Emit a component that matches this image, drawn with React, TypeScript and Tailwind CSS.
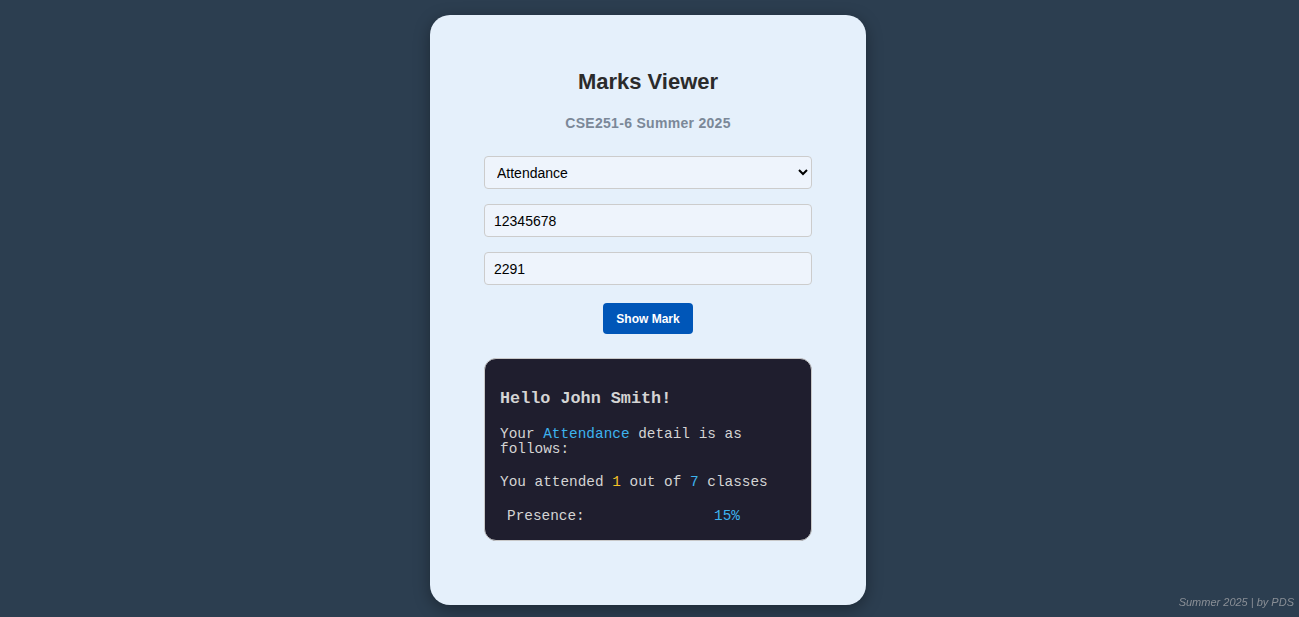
import { useState } from "react";

export default function App() {
  const [type, setType] = useState("Attendance");
  const [id, setId] = useState("12345678");
  const [code, setCode] = useState("2291");

  return (
    <div className="min-h-screen bg-[#2c3e50] flex justify-center pt-[15px] pr-[3px] font-['Liberation_Sans',Arial,sans-serif]">
      <div className="w-[436px] h-[590px] rounded-[20px] bg-[#e5f0fb] shadow-[0_4px_16px_rgba(0,0,0,0.35)] px-[54px] pt-[54px] flex flex-col items-center">
        <h1 className="text-[22px] leading-[26px] font-bold text-[#2b2b2b]">Marks Viewer</h1>
        <h2 className="mt-[20px] text-[14px] leading-[17px] font-bold text-[#7b8898] tracking-[0.3px]">
          CSE251-6 Summer 2025
        </h2>

        <select
          value={type}
          onChange={(e) => setType(e.target.value)}
          className="mt-[24px] w-full h-[33px] rounded-[4px] border border-[#cccccc] bg-[#eef4fc] pl-[8px] pr-[6px] text-[14px] text-black"
        >
          <option>Attendance</option>
          <option>Quiz</option>
          <option>Assignment</option>
        </select>
        <input
          value={id}
          onChange={(e) => setId(e.target.value)}
          className="mt-[15px] w-full h-[33px] rounded-[4px] border border-[#cccccc] bg-[#eef4fc] px-[9px] text-[14px] text-black outline-none"
        />
        <input
          value={code}
          onChange={(e) => setCode(e.target.value)}
          className="mt-[15px] w-full h-[33px] rounded-[4px] border border-[#cccccc] bg-[#eef4fc] px-[9px] text-[14px] text-black outline-none"
        />
        <button className="mt-[18px] w-[90px] h-[31px] rounded-[4px] bg-[#0056b8] text-white text-[12px] font-bold">
          Show Mark
        </button>

        <div className="mt-[24px] w-full h-[183px] rounded-[12px] border border-[#c8c8c8] bg-[#1f1e2e] px-[15px] text-[#d4d4d4] font-['Liberation_Mono','Courier_New',monospace]">
          <h3 className="mt-[30px] text-[16.8px] leading-[20px] font-bold">Hello John Smith!</h3>
          <p className="mt-[18px] text-[14.4px] leading-[15px]">
            Your <span className="text-[#3db3ee]">Attendance</span> detail is as follows:
          </p>
          <p className="mt-[18px] text-[14.4px] leading-[15px]">
            You attended <span className="text-[#f5c228]">1</span> out of{" "}
            <span className="text-[#3db3ee]">7</span> classes
          </p>
          <div className="mt-[19px] flex text-[14.4px] leading-[15px]">
            <span className="w-[214px] pl-[7px]">Presence:</span>
            <span className="text-[#3db3ee]">15%</span>
          </div>
        </div>
      </div>
      <div className="fixed right-[5px] bottom-[7px] text-[11px] italic text-[#8a8f96]">Summer 2025 | by PDS</div>
    </div>
  );
}
